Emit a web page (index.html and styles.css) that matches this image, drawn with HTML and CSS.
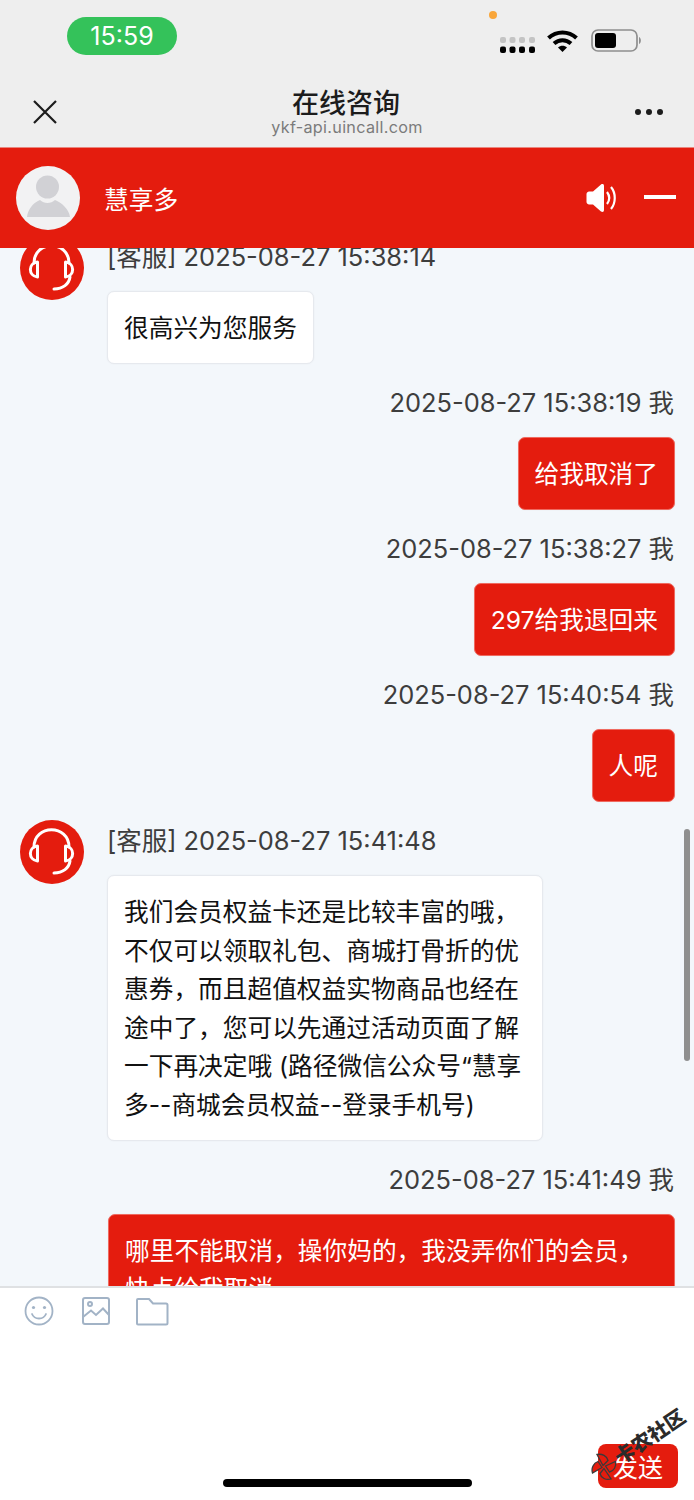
FILE: index.html
```html
<!DOCTYPE html>
<html lang="zh">
<head>
<meta charset="utf-8">
<title>在线咨询</title>
<link rel="stylesheet" href="styles.css">
</head>
<body>
<div class="app">
  <div class="topbar">
    <div class="status">
      <div class="clock">15:59</div>
      <span class="mic-dot"></span>
      <div class="status-right">
        <svg class="signal" width="35" height="16" viewBox="0 0 35 16"><g fill="#c4c4c4"><rect x="0" y="0" width="6" height="6" rx="2"/><rect x="9.500" y="0" width="6" height="6" rx="2"/><rect x="19" y="0" width="6" height="6" rx="2"/><rect x="29" y="0" width="6" height="6" rx="2"/></g><g fill="#000"><rect x="0" y="9.500" width="6" height="6.500" rx="2"/><rect x="9.500" y="9.500" width="6" height="6.500" rx="2"/><rect x="19" y="9.500" width="6" height="6.500" rx="2"/><rect x="29" y="9.500" width="6" height="6.500" rx="2"/></g></svg>
        <svg class="wifi" width="31" height="23" viewBox="0 0 31 23"><g fill="none" stroke="#000" stroke-width="4"><path d="M1.500 9C9.500 1.500 21.500 1.500 29.500 9"/><path d="M7 14.500C12 10 19 10 24 14.500"/></g><path d="M11 18.500C13.500 16 17.500 16 20 18.500L15.500 23Z" fill="#000"/></svg>
        <svg class="battery" width="51" height="23" viewBox="0 0 51 23"><rect x="1" y="1" width="45" height="21" rx="6" fill="none" stroke="#8e8e8e" stroke-width="1.700"/><rect x="4" y="4" width="21" height="15" rx="3" fill="#000"/><path d="M48 8C50.500 9 50.500 14 48 15Z" fill="#8e8e8e"/></svg>
      </div>
    </div>
    <div class="nav">
      <svg class="nav-close" width="26" height="26" viewBox="0 0 26 26"><path d="M2 2L24 24M24 2L2 24" stroke="#1c1c1c" stroke-width="2.200" fill="none"/></svg>
      <div class="nav-title">
        <div class="title">在线咨询</div>
        <div class="domain">ykf-api.uincall.com</div>
      </div>
      <div class="nav-more"><i></i><i></i><i></i></div>
    </div>
  </div>
  <header class="chat-head">
    <div class="agent">
      <svg class="agent-photo" width="64" height="64" viewBox="0 0 64 64"><circle cx="32" cy="32" r="32" fill="#f2f2f3"/><circle cx="31.500" cy="21" r="11.500" fill="#d1d1d5"/><path d="M11 51C12 43 17 37 24 34C28 38 35 38 39 34C46 37 53 43 54 51Z" fill="#d1d1d5"/></svg>
      <span class="agent-name">慧享多</span>
    </div>
    <div class="head-actions">
      <svg width="32" height="30" viewBox="0 0 32 30"><path d="M.500 11C.500 9.500 2 8.500 3 8.500H7L15 1.500C16.500 .500 18 1 18 3V27C18 29 16.500 29.500 15 28.500L7 21.500H3C2 21.500 .500 20.500 .500 19Z" fill="#fff"/><g fill="none" stroke="#fff" stroke-width="2.200"><path d="M21 9C24 13 24 17 21 21"/><path d="M25 4C30 10 30 20 25 26"/></g></svg>
      <span class="minimize"></span>
    </div>
  </header>
  <main class="chat">
    <div class="thread">
      <article class="msg">
        <svg class="avatar" width="64" height="64" viewBox="0 0 64 64"><circle cx="32" cy="32" r="32" fill="#e41c0e"/><g fill="none" stroke="#fff" stroke-width="3" stroke-linecap="round" stroke-linejoin="round"><path d="M14 27C14 4 49 4 49 27"/><path d="M17.500 26C8 27 8 40 17.500 41Z"/><path d="M45.500 26C55 27 55 40 45.500 41Z"/><path d="M50 41C49 48 43 53 34 53"/></g></svg>
        <div class="msg-body">
          <div class="meta">[客服] 2025-08-27 15:38:14</div>
          <div class="bubble">很高兴为您服务</div>
        </div>
      </article>
      <article class="msg mine">
        <div class="msg-body">
          <div class="meta">2025-08-27 15:38:19 我</div>
          <div class="bubble">给我取消了</div>
        </div>
      </article>
      <article class="msg mine">
        <div class="msg-body">
          <div class="meta">2025-08-27 15:38:27 我</div>
          <div class="bubble">297给我退回来</div>
        </div>
      </article>
      <article class="msg mine">
        <div class="msg-body">
          <div class="meta">2025-08-27 15:40:54 我</div>
          <div class="bubble">人呢</div>
        </div>
      </article>
      <article class="msg">
        <svg class="avatar" width="64" height="64" viewBox="0 0 64 64"><circle cx="32" cy="32" r="32" fill="#e41c0e"/><g fill="none" stroke="#fff" stroke-width="3" stroke-linecap="round" stroke-linejoin="round"><path d="M14 27C14 4 49 4 49 27"/><path d="M17.500 26C8 27 8 40 17.500 41Z"/><path d="M45.500 26C55 27 55 40 45.500 41Z"/><path d="M50 41C49 48 43 53 34 53"/></g></svg>
        <div class="msg-body">
          <div class="meta">[客服] 2025-08-27 15:41:48</div>
          <div class="bubble wide">我们会员权益卡还是比较丰富的哦，不仅可以领取礼包、商城打骨折的优惠券，而且超值权益实物商品也经在途中了，您可以先通过活动页面了解一下再决定哦 (路径微信公众号“慧享多--商城会员权益--登录手机号)</div>
        </div>
      </article>
      <article class="msg mine">
        <div class="msg-body">
          <div class="meta">2025-08-27 15:41:49 我</div>
          <div class="bubble long">哪里不能取消，操你妈的，我没弄你们的会员，快点给我取消</div>
        </div>
      </article>
    </div>
    <span class="scrollbar"></span>
  </main>
  <footer class="composer">
    <div class="tools">
      <svg width="30" height="30" viewBox="0 0 30 30"><g fill="none" stroke="#a2b3c6" stroke-width="1.800"><circle cx="15" cy="15" r="13.500"/><path d="M8 18C10.500 24 19.500 24 22 18" stroke-linecap="round"/></g><circle cx="9.500" cy="11.500" r="1.600" fill="#a2b3c6"/><circle cx="20.500" cy="11.500" r="1.600" fill="#a2b3c6"/></svg>
      <svg width="30" height="30" viewBox="0 0 30 30"><g fill="none" stroke="#a2b3c6" stroke-width="2"><rect x="2" y="2" width="26" height="26" rx="2"/><circle cx="9" cy="8" r="2"/><path d="M2 21L10 14.500L15 19L22 12.500L28 19"/></g></svg>
      <svg class="folder" width="34" height="30" viewBox="0 0 34 30"><path d="M2 27.500V4C2 3.300 2.500 3 3 3H14L18 7.500H31C32 7.500 32.500 8 32.500 9V27C32.500 28 32 28.500 31 28.500H3C2.500 28.500 2 28 2 27.500Z" fill="none" stroke="#a2b3c6" stroke-width="2"/></svg>
    </div>
    <button class="send">发送</button>
    <svg class="wm-mark" width="26" height="28" viewBox="0 0 26 28"><g fill="#e41c0e" stroke="#3a3a3a" stroke-width="1.300"><path d="M12 12.500L6 1.500C11 .500 16 3 17 7.500Z"/><path d="M14.500 13L24.500 8.500C25.500 13.500 23 18 18.500 19Z"/><path d="M13 15.500L20 26C15 27.500 10 25 9 20.500Z"/><path d="M11 14.500L1.500 20C0 15 2.500 10 7 8.500Z"/></g></svg>
    <span class="wm-text">卡农社区</span>
    <span class="home-bar"></span>
  </footer>
</div>
</body>
</html>
```
FILE: styles.css
```css
* { box-sizing: border-box; }
html, body { margin: 0; padding: 0; }
body { font-family: "Inter", "Noto Sans CJK SC", sans-serif; }
.app { width: 694px; height: 1500px; display: flex; flex-direction: column; overflow: hidden; background: #fff; position: relative; }
.topbar { height: 148px; background: #eeeeee; flex: none; border-bottom: 1px solid #e9867e; }
.status { height: 76px; display: flex; align-items: flex-start; position: relative; padding-left: 67px; padding-top: 17px; }
.clock { width: 110px; height: 38px; border-radius: 19px; background: #34c25a; color: #fff; font-size: 25px; line-height: 38px; text-align: center; }
.mic-dot { position: absolute; left: 489px; top: 11px; width: 8px; height: 8px; border-radius: 50%; background: #f9a63a; }
.status-right { margin-left: auto; margin-top: 12px; display: flex; align-items: flex-start; padding-right: 52px; }
.signal { margin-top: 8px; }
.wifi { margin-left: 12px; }
.battery { margin-left: 13px; }
.nav { height: 71px; display: flex; align-items: center; justify-content: space-between; padding: 0 32px; position: relative; }
.nav-title { position: absolute; left: 0; right: 0; top: 13px; text-align: center; }
.title { font-size: 27px; line-height: 29px; font-weight: 500; color: #1c1c1c; margin-left: -2px; }
.domain { font-size: 16.200px; line-height: 18px; color: #7b7b7b; letter-spacing: .3px; }
.nav-more { display: flex; gap: 5px; padding-top: 1px; margin-right: -1px; }
.nav-more i { width: 6px; height: 6px; border-radius: 50%; background: #1c1c1c; display: block; }
.chat-head { height: 100px; flex: none; background: #e41c0e; display: flex; align-items: center; justify-content: space-between; padding: 0 18px 0 16px; }
.agent { display: flex; align-items: center; gap: 24px; }
.agent-name { color: #fff; font-size: 24.700px; }
.head-actions { display: flex; align-items: center; gap: 26px; }
.minimize { width: 32px; height: 4px; background: #fff; display: block; margin-top: -2px; }
.chat { flex: 1; background: #f3f7fb; position: relative; overflow: hidden; min-height: 0; }
.thread { display: flex; flex-direction: column; margin-top: -12px; padding: 0 19px 0 19.500px; gap: 18.400px; }
.msg { display: flex; gap: 23.500px; }
.msg.mine { justify-content: flex-end; }
.avatar { flex: none; }
.msg-body { display: flex; flex-direction: column; align-items: flex-start; min-width: 0; }
.mine .msg-body { align-items: flex-end; }
.meta { font-size: 25.450px; line-height: 40px; color: #3d3d3d; margin-bottom: 14px; padding-top: 1px; }
.mine .meta { padding-right: 1px; }
.bubble { background: #fff; color: #111; font-size: 24.700px; line-height: 38.600px; padding: 17px 16px 15px; border: 1px solid #e6e9ee; border-radius: 7px; box-shadow: 0 0 2px rgba(0,0,0,.05); }
.mine .bubble { background: #e41c0e; color: #fff; border-color: #ef6a60; }
.bubble.wide { width: 436px; }
.bubble.long { width: 567px; }
.scrollbar { position: absolute; left: 684px; top: 581px; width: 6px; height: 232px; border-radius: 3px; background: #8f8f8f; }
.composer { height: 214px; flex: none; border-top: 2px solid #dfe1e3; background: #fff; position: relative; }
.tools { display: flex; gap: 27px; padding: 8px 0 0 24px; }
.folder { margin-left: -3px; }
.send { position: absolute; left: 598px; top: 156px; width: 80px; height: 44px; border: 0; border-radius: 8px; background: #e41c0e; color: #fff; font-family: inherit; font-size: 25px; padding: 0; }
.wm-mark { position: absolute; left: 591px; top: 165px; }
.wm-text { position: absolute; left: 607px; top: 136px; width: 86px; text-align: center; transform: rotate(-34deg); font-size: 20px; font-weight: 900; color: #2b2b2b; line-height: 26px; white-space: nowrap; }
.home-bar { position: absolute; left: 223px; top: 191px; width: 249px; height: 8px; border-radius: 4px; background: #000; }
```
